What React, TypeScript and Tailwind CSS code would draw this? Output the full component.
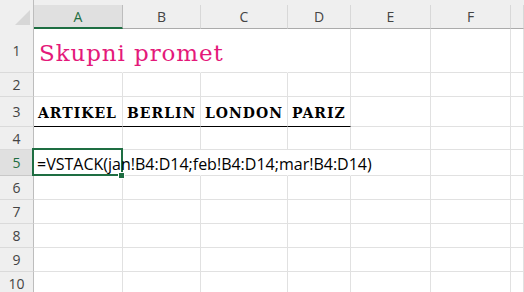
import React from "react";

const cols = [
  { key: "A", w: "w-[89px]" },
  { key: "B", w: "w-[78px]" },
  { key: "C", w: "w-[87px]" },
  { key: "D", w: "w-[63px]" },
  { key: "E", w: "w-[80px]" },
  { key: "F", w: "w-[80px]" },
  { key: "G", w: "flex-1" },
];

const sans = { fontFamily: '"Open Sans", "Noto Sans", sans-serif' };
const serif = { fontFamily: '"DejaVu Serif", "Liberation Serif", serif' };

type RowDef = {
  n: number;
  h: string;
  // columns whose right gridline is hidden because text spills over it
  hide?: string[];
  underline?: string[];
};

const rows: RowDef[] = [
  { n: 1, h: "h-[44px]", hide: ["A", "B", "C"] },
  { n: 2, h: "h-[24px]" },
  { n: 3, h: "h-[30px]", underline: ["A", "B", "C", "D"] },
  { n: 4, h: "h-[23px]" },
  { n: 5, h: "h-[26px]", hide: ["A", "B", "C", "D"] },
  { n: 6, h: "h-[24px]" },
  { n: 7, h: "h-[24px]" },
  { n: 8, h: "h-[24px]" },
  { n: 9, h: "h-[24px]" },
  { n: 10, h: "h-[24px]" },
];

const headings: Record<string, string> = {
  A: "ARTIKEL",
  B: "BERLIN",
  C: "LONDON",
  D: "PARIZ",
};

function CellContent({ row, col }: { row: number; col: string }) {
  if (row === 1 && col === "A") {
    return (
      <div className="flex h-full items-end pb-[7px] pl-[5px]">
        <span
          className="whitespace-nowrap text-[23px] leading-none tracking-[0.9px] text-[#e4197a]"
          style={serif}
        >
          Skupni promet
        </span>
      </div>
    );
  }
  if (row === 3 && headings[col]) {
    return (
      <div className="flex h-full items-end pb-[6px] pl-[4px]">
        <span
          className="whitespace-nowrap text-[14px] font-bold leading-none tracking-[1px] text-black"
          style={serif}
        >
          {headings[col]}
        </span>
      </div>
    );
  }
  if (row === 5 && col === "A") {
    return (
      <>
        <div className="relative z-10 flex h-full items-end pb-[3px] pl-[3px]">
          <span
            className="whitespace-nowrap text-[16px] leading-none text-black"
            style={sans}
          >
            =VSTACK(jan!B4:D14;feb!B4:D14;mar!B4:D14)
          </span>
        </div>
        {/* active cell frame + fill handle */}
        <div className="absolute -left-[2px] -top-[2px] -right-[1px] -bottom-[1px] border-2 border-[#1e6e42]" />
        <div className="absolute -right-[3px] -bottom-[4px] z-20 h-[7px] w-[7px] border border-white bg-[#1e6e42]" />
      </>
    );
  }
  return null;
}

export default function App() {
  return (
    <div className="h-[292px] w-[524px] overflow-hidden bg-white">
      {/* column headers */}
      <div className="flex h-[29px] bg-[#efefef]">
        <div className="flex h-full w-[34px] shrink-0 items-end justify-end border-r border-[#bdbdbd] pb-[4px] pr-[3px]">
          <div
            className="h-[15px] w-[15px] bg-[#d7d7d7]"
            style={{ clipPath: "polygon(100% 0, 100% 100%, 0 100%)" }}
          />
        </div>
        {cols.map((c) => {
          const active = c.key === "A";
          return (
            <div
              key={c.key}
              className={`mt-[5px] flex shrink-0 items-center justify-center text-[14px] ${c.w} ${
                active
                  ? "border-b-2 border-r border-r-[#bdbdbd] border-b-[#1e6e42] bg-[#e0e0e0] text-[#1e6e42]"
                  : "border-b border-r border-b-[#ababab] border-r-[#d8d8d8] text-[#444]"
              }`}
              style={sans}
            >
              {c.key !== "G" ? c.key : ""}
            </div>
          );
        })}
      </div>

      {rows.map((r) => (
        <div key={r.n} className={`flex ${r.h}`}>
          <div
            className={`flex w-[34px] shrink-0 items-center justify-center border-b border-r text-[14px] ${
              r.n === 5
                ? "border-b-[#c8c8c8] border-r-[#bdbdbd] bg-[#e0e0e0] text-[#1e6e42]"
                : "border-b-[#dadada] border-r-[#bdbdbd] bg-[#efefef] text-[#444]"
            }`}
            style={sans}
          >
            {r.n}
          </div>
          {cols.map((c) => {
            const hidden = r.hide?.includes(c.key);
            const under = r.underline?.includes(c.key);
            return (
              <div
                key={c.key}
                className={`relative shrink-0 ${c.w} border-r border-b ${
                  hidden ? "border-r-transparent" : "border-r-[#e1e1e1]"
                } ${under ? "border-b-black" : "border-b-[#e1e1e1]"}`}
              >
                <CellContent row={r.n} col={c.key} />
              </div>
            );
          })}
        </div>
      ))}
    </div>
  );
}
